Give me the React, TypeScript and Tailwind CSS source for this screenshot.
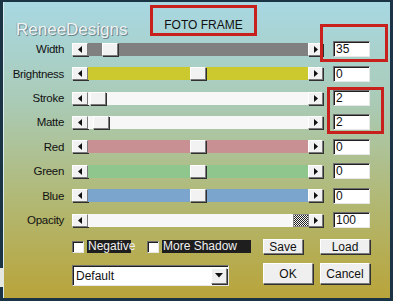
import React from 'react';

const raised =
  'border border-t-white border-l-white border-r-[#7a7a7a] border-b-[#7a7a7a] shadow-[1px_1px_0_#303030]';
const sunken =
  'border border-t-[#6e6e6e] border-l-[#6e6e6e] border-r-[#e8e8e8] border-b-[#e8e8e8] shadow-[inset_1px_1px_0_#202020]';

function Arrow({ dir }: { dir: 'left' | 'right' | 'down' }) {
  if (dir === 'down') {
    return (
      <svg width="8" height="5" viewBox="0 0 8 5">
        <path d="M0 0h8L4 4.5z" fill="#111" />
      </svg>
    );
  }
  return (
    <svg width="4" height="7" viewBox="0 0 4 7">
      <path d={dir === 'left' ? 'M4 0v7L0 3.5z' : 'M0 0v7l4-3.5z'} fill="#111" />
    </svg>
  );
}

type Row = {
  label: string;
  value: string;
  track: string;
  thumb: number;
  checker?: boolean;
};

const rows: Row[] = [
  { label: 'Width', value: '35', track: 'bg-[#808080]', thumb: 14 },
  { label: 'Brightness', value: '0', track: 'bg-[#cbc92e]', thumb: 102 },
  { label: 'Stroke', value: '2', track: 'bg-[#f7f7f7]', thumb: 2 },
  { label: 'Matte', value: '2', track: 'bg-[#f7f7f7]', thumb: 5 },
  { label: 'Red', value: '0', track: 'bg-[#c99093]', thumb: 102 },
  { label: 'Green', value: '0', track: 'bg-[#8ec68e]', thumb: 102 },
  { label: 'Blue', value: '0', track: 'bg-[#7ba5cc]', thumb: 102 },
  { label: 'Opacity', value: '100', track: 'bg-[#f7f7f7]', thumb: 205, checker: true },
];

function SliderRow({ row }: { row: Row }) {
  return (
    <div className="flex h-[24.43px] items-center">
      <div className="w-[61px] text-right text-[11.5px] leading-[14px] tracking-[-0.3px] text-[#111]">{row.label}</div>
      <div className="ml-[8px] flex h-[13px] w-[251px]">
        <div className={`flex w-[16px] items-center justify-center bg-[#f2f2f2] ${raised}`}>
          <Arrow dir="left" />
        </div>
        <div className={`relative flex-1 ${row.track}`}>
          <div
            className={`absolute top-0 h-[13px] w-[16px] ${
              row.checker
                ? 'bg-[repeating-conic-gradient(#222_0_25%,#f4f4f4_0_50%)] bg-[length:2px_2px] border border-[#888]'
                : `bg-[#f2f2f2] ${raised}`
            }`}
            style={{ left: row.thumb }}
          />
        </div>
        <div className={`flex w-[15px] items-center justify-center bg-[#f2f2f2] ${raised}`}>
          <Arrow dir="right" />
        </div>
      </div>
      <div className={`ml-[10px] h-[16px] w-[37px] bg-white pl-[2px] text-[12px] leading-[14px] text-[#111] ${sunken}`}>
        {row.value}
      </div>
    </div>
  );
}

function Check({ label, w }: { label: string; w: string }) {
  return (
    <div className="flex items-center">
      <div className={`h-[12px] w-[12px] bg-white ${sunken}`} />
      <div className={`ml-[3px] h-[13px] ${w} bg-[#1e1e1e] pl-[1px] text-[12px] leading-[13px] text-[#f0f0f0]`}>
        {label}
      </div>
    </div>
  );
}

function Btn({ label, w, h }: { label: string; w: string; h: string }) {
  return (
    <div className={`flex ${w} ${h} items-center justify-center bg-[#efefef] text-[12px] text-[#111] ${raised}`}>
      {label}
    </div>
  );
}

export default function App() {
  return (
    <div
      className="relative h-[301px] w-[393px] border-b-[3px] border-l-[3px] border-r-[3px] border-t-[2px] border-[#1b3445] bg-[linear-gradient(180deg,#a8d8e3_0%,#aacab4_35%,#b1b976_66%,#b9a43a_100%)] shadow-[inset_1px_0_0_#dcecef]"
      style={{ fontFamily: '"Liberation Sans", Arial, sans-serif' }}
    >
      {/* header */}
      <div className="flex h-[35px]">
        <div className="w-[147px] pl-[13px] pt-[18px] text-[17px] leading-[20px] text-[#eef3f3] [text-shadow:1px_1px_0_#6a858c,-1px_0_0_#9ab4b8]">
          ReneeDesigns
        </div>
        <div className="mt-[3px] h-[31px] w-[107px] border-[3px] border-[#c8211d] pt-[11px] text-center text-[12px] leading-[12px] text-[#111]">
          FOTO FRAME
        </div>
      </div>

      {rows.map((r) => (
        <SliderRow key={r.label} row={r} />
      ))}

      {/* bottom controls */}
      <div className="mt-[7px] flex h-[15px] items-center pl-[69px]">
        <Check label="Negative" w="w-[44px]" />
        <div className="ml-[16px]">
          <Check label="More Shadow" w="w-[89px]" />
        </div>
        <div className="ml-[12px] flex">
          <Btn label="Save" w="w-[40px]" h="h-[15px]" />
          <div className="ml-[17px]">
            <Btn label="Load" w="w-[50px]" h="h-[15px]" />
          </div>
        </div>
      </div>

      <div className="mt-[9px] flex items-start pl-[69px]">
        <div className={`mt-[2px] flex h-[21px] w-[157px] items-center justify-between bg-white pl-[3px] pr-[1px] text-[12px] text-[#111] ${sunken}`}>
          <span>Default</span>
          <div className={`flex h-[16px] w-[16px] items-center justify-center bg-[#efefef] ${raised}`}>
            <Arrow dir="down" />
          </div>
        </div>
        <div className="ml-[34px] flex">
          <Btn label="OK" w="w-[50px]" h="h-[21px]" />
          <div className="ml-[7px]">
            <Btn label="Cancel" w="w-[50px]" h="h-[21px]" />
          </div>
        </div>
      </div>

      {/* annotation boxes */}
      <div className="absolute left-[317px] top-[22px] h-[38px] w-[68px] border-[3px] border-[#c8211d]" />
      <div className="absolute left-[324px] top-[85px] h-[47px] w-[57px] border-[3px] border-[#c8211d]" />
      {/* stray window edge at left */}
      <div className="absolute left-[-3px] top-[266px] h-[19px] w-[4px] bg-[#e4e8e0]" />
    </div>
  );
}
